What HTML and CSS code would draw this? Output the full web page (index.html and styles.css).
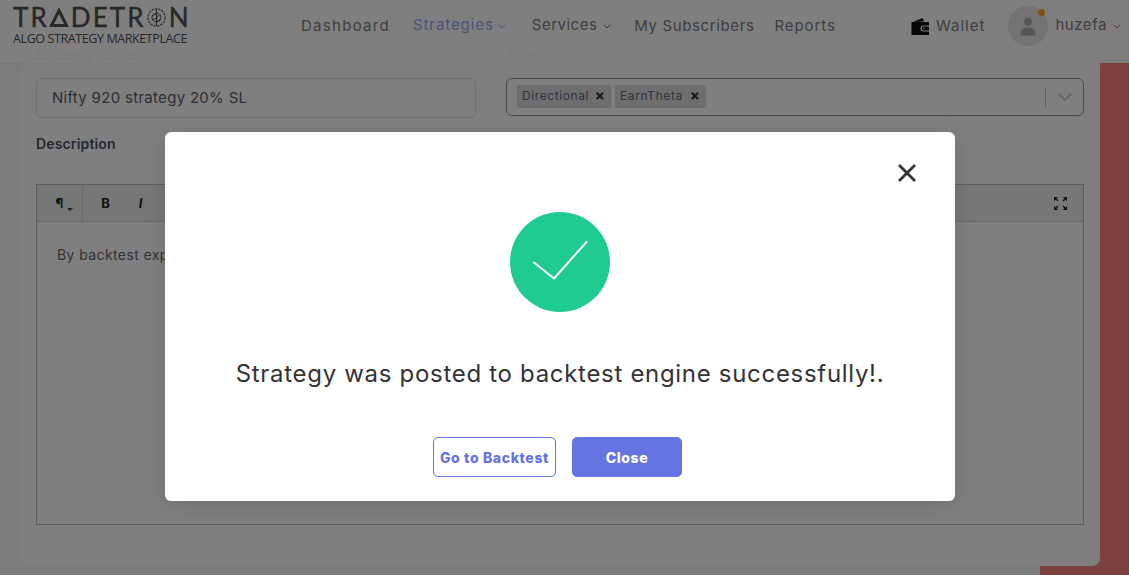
FILE: index.html
```html
<!DOCTYPE html>
<html lang="en">
<head>
<meta charset="utf-8">
<title>Tradetron</title>
<link rel="stylesheet" href="styles.css">
</head>
<body>
<div class="decor decor-right"></div>
<div class="decor decor-bottom"></div>
<main class="card">
  <div class="card-spacer"></div>
  <div class="form-row">
    <div class="field field-name">
      <label class="label label-ghost">Strategy name</label>
      <div class="input">Nifty 920 strategy 20% SL</div>
    </div>
    <div class="field field-tags">
      <label class="label label-ghost">Tags</label>
      <div class="select">
        <span class="chip">Directional<b class="chip-x">×</b></span>
        <span class="chip">EarnTheta<b class="chip-x">×</b></span>
        <span class="select-end">
          <svg width="14" height="8" viewBox="0 0 14 8"><path d="M1 1l6 6 6-6" fill="none" stroke="#cfcfcf" stroke-width="2"/></svg>
        </span>
      </div>
    </div>
  </div>
  <div class="label label-desc">Description</div>
  <div class="editor">
    <div class="toolbar">
      <span class="tool tool-para">¶<i class="mini-caret"></i></span>
      <span class="tool tool-b">B</span>
      <span class="tool tool-i">I</span>
      <svg class="tool-full" width="15" height="15" viewBox="0 0 15 15"><path d="M1 1h4L1 5zM14 1h-4l4 4zM1 14h4l-4-4zM14 14h-4l4-4z" fill="#222"/><path d="M2 2l3 3M13 2l-3 3M2 13l3-3M13 13l-3-3" stroke="#222" stroke-width="1.300"/></svg>
    </div>
    <div class="editor-body">By backtest expiry</div>
  </div>
</main>

<header class="topbar">
  <div class="logo">
    <div class="logo-main">TR<svg class="logo-tri" width="20" height="19" viewBox="0 0 20 19"><path d="M10 2.500L17.500 17.500H2.500z" fill="none" stroke="#505050" stroke-width="3"/></svg>DETR<svg class="logo-gear" width="21" height="21" viewBox="0 0 21 21"><g fill="none" stroke="#505050"><circle cx="10.500" cy="10.500" r="8.600" stroke-width="1.200" stroke-dasharray="2.400 1.100"/><circle cx="10.500" cy="10.500" r="4.500" stroke-width="1"/><path d="M10.500 2v17M10.500 6.500l-3 2M10.500 10l3-2M10.500 11l-3.500 2M10.500 14.500l3.500-2" stroke-width="1"/></g></svg>N</div>
    <div class="logo-sub">ALGO STRATEGY MARKETPLACE</div>
  </div>
  <nav class="nav">
    <a class="nav-item nav-dashboard">Dashboard</a>
    <a class="nav-item nav-active">Strategies<svg class="caret" width="8" height="5" viewBox="0 0 8 5"><path d="M.7.7L4 4l3.300-3.300" fill="none" stroke="currentColor"/></svg></a>
    <a class="nav-item nav-services">Services<svg class="caret" width="8" height="5" viewBox="0 0 8 5"><path d="M.7.7L4 4l3.300-3.300" fill="none" stroke="currentColor"/></svg></a>
    <a class="nav-item nav-subs">My Subscribers</a>
    <a class="nav-item nav-reports">Reports</a>
  </nav>
  <div class="account">
    <a class="wallet">
      <svg width="19" height="19" viewBox="0 0 19 19"><path d="M2 5L11.500 1l1.500 3.500z" fill="#111"/><path d="M.5 5h17.500v3.500h-5.500a3 3 0 000 6h5.500V18H.5z" fill="#111"/><rect x="11" y="9.500" width="7" height="4" rx="1" fill="#111"/><circle cx="13" cy="11.500" r=".9" fill="#999"/></svg>
      Wallet
    </a>
    <span class="avatar">
      <svg width="16" height="19" viewBox="0 0 16 19"><circle cx="8" cy="4.600" r="3.900" fill="#aaa"/><path d="M.5 18.500c0-5 2.500-8 7.500-8s7.500 3 7.500 8z" fill="#aaa"/></svg>
      <i class="dot"></i>
    </span>
    <a class="user">huzefa<svg class="caret" width="8" height="5" viewBox="0 0 8 5"><path d="M.7.7L4 4l3.300-3.300" fill="none" stroke="currentColor"/></svg></a>
  </div>
</header>

<div class="backdrop">
  <section class="dialog" role="dialog">
    <button class="dialog-close" aria-label="Close">
      <svg width="20" height="20" viewBox="0 0 20 20"><path d="M2 2l16 16M18 2L2 18" stroke="#333" stroke-width="2.800" fill="none"/></svg>
    </button>
    <div class="success">
      <svg width="100" height="100" viewBox="0 0 100 100"><circle cx="50" cy="50" r="50" fill="#20cb91"/><path d="M24 50.500L44 66.500 76.500 30" fill="none" stroke="#fff" stroke-width="2" stroke-linecap="round" stroke-linejoin="round"/></svg>
    </div>
    <p class="message">Strategy was posted to backtest engine successfully!.</p>
    <div class="actions">
      <button class="btn btn-outline">Go to Backtest</button>
      <button class="btn btn-solid">Close</button>
    </div>
  </section>
</div>
</body>
</html>
```
FILE: styles.css
```css
* { box-sizing: border-box; }
html, body { margin: 0; height: 100%; }
body {
  position: relative;
  height: 575px;
  overflow: hidden;
  background: #f9f9f9;
  font-family: "Inter", "Open Sans", sans-serif;
  color: #555;
  padding-left: 20px;
}
.decor { position: absolute; background: #fb847e; }
.decor-right { left: 1100px; right: 0; top: 0; bottom: 0; }
.decor-bottom { left: 1039px; right: 0; top: 500px; bottom: 0; clip-path: polygon(0 0, 100% 0, 100% 100%, 1px 100%); }

.card {
  position: relative;
  width: 1080px;
  height: 566px;
  background: #fff;
  border-radius: 0 0 8px 8px;
  padding: 0 16px;
  display: flex;
  flex-direction: column;
}
.card-spacer { height: 46px; }
.form-row { display: flex; gap: 30px; }
.field-name { width: 440px; }
.field-tags { flex: 1; }
.label { font-size: 14px; font-weight: 600; color: #4a5060; }
.label-ghost { display: block; height: 32px; line-height: 18px; color: #4a5060; }
.input {
  height: 40px;
  border: 1px solid #ddd;
  border-radius: 6px;
  padding: 0 15px;
  line-height: 38px;
  font-size: 15px;
  letter-spacing: .3px;
  color: #5b5b6e;
}
.select {
  height: 38px;
  border: 1px solid #999;
  border-radius: 6px;
  padding: 6px 10px;
  display: flex;
  gap: 4px;
  align-items: flex-start;
}
.chip {
  display: flex;
  align-items: center;
  justify-content: space-between;
  height: 23px;
  padding: 0 6px 2px 5px;
  background: #ddd;
  border-radius: 2px;
  font-size: 12px;
  letter-spacing: .6px;
  color: #5e6880;
}
.chip:nth-child(1) { width: 94px; }
.chip:nth-child(2) { width: 91px; }
.chip-x { font-size: 15px; color: #333; font-weight: 700; line-height: 1; letter-spacing: 0; }
.select-end {
  margin-left: auto;
  width: 38px;
  height: 20px;
  margin-top: 2px;
  margin-right: -10px;
  border-left: 1px solid #bbb;
  display: flex;
  align-items: center;
  justify-content: center;
}
.label-desc { margin-top: 16px; height: 50px; line-height: 20px; letter-spacing: .15px; }
.editor { height: 341px; border: 1px solid #bbb; display: flex; flex-direction: column; }
.toolbar {
  height: 37px;
  background: #eaeef2;
  border-bottom: 1px solid #d5d5d5;
  display: flex;
  align-items: center;
  position: relative;
  font-size: 13px;
  color: #222;
  font-weight: 700;
}
.tool { display: flex; align-items: center; justify-content: center; }
.tool-para { width: 46px; height: 100%; border-right: 1px solid #d5d5d5; position: relative; }
.mini-caret { position: absolute; left: 30px; bottom: 10px; border: 3px solid transparent; border-top-color: #444; border-bottom: 0; }
.tool-b { width: 45px; }
.tool-i { width: 25px; font-style: italic; }
.tool-full { margin-left: auto; margin-right: 15px; }
.editor-body { padding: 24px 20px; font-size: 14px; line-height: 18px; letter-spacing: .4px; color: #666; }

.topbar {
  position: absolute;
  left: 0; top: 0; right: 0;
  height: 63px;
  background: rgba(255, 255, 255, .96);
  box-shadow: 0 1px 4px rgba(0, 0, 0, .06);
  display: flex;
  align-items: flex-start;
  padding: 0 0 0 13px;
}
.logo { width: 288px; padding-top: 5px; color: #505050; }
.logo-main { display: flex; align-items: center; height: 24px; font-size: 26px; font-family: "Lato", sans-serif; letter-spacing: 2.100px; line-height: 24px; -webkit-text-stroke: .4px #505050; }
.logo-tri { margin: 0 2px 0 0; }
.logo-gear { margin: 0 2px 0 0; }
.logo-sub { margin-top: 3px; font-family: "Open Sans", sans-serif; font-size: 12.500px; font-weight: 500; letter-spacing: -.4px; line-height: 14px; white-space: nowrap; }
.nav { display: flex; gap: 20px; padding-top: 16px; font-size: 15px; letter-spacing: .62px; line-height: 20px; color: #7d7d7d; }
.nav-item { display: flex; align-items: center; white-space: nowrap; }
.nav-dashboard { letter-spacing: 1.290px; }
.nav-active { color: #98a4f8; letter-spacing: .92px; margin-left: 3px; position: relative; top: -1px; }
.nav-active .caret { margin-left: 4px; }
.nav-services { letter-spacing: .5px; margin-left: 6px; position: relative; top: -1px; }
.nav-subs { margin-left: 3px; }
.nav-reports { letter-spacing: .9px; }
.caret { margin-left: 6px; margin-top: 3px; }
.account { display: flex; align-items: flex-start; margin-left: auto; padding-right: 8px; font-size: 15px; letter-spacing: .55px; color: #7d7d7d; }
.wallet { display: flex; align-items: center; gap: 6px; margin-top: 16px; line-height: 20px; letter-spacing: 1px; }
.avatar {
  position: relative;
  display: flex;
  align-items: center;
  justify-content: center;
  width: 40px;
  height: 40px;
  margin: 6px 7px 0 23px;
  border-radius: 50%;
  background: #e6e6e6;
}
.dot { position: absolute; left: 30px; top: 3px; width: 7px; height: 7px; border-radius: 50%; background: #f9a825; }
.user { display: flex; align-items: center; margin-top: 15px; line-height: 20px; }

.backdrop {
  position: absolute;
  inset: 0;
  background: rgba(0, 0, 0, .5);
  padding: 132px 174px 0 165px;
}
.dialog {
  position: relative;
  height: 369px;
  background: #fff;
  border-radius: 6px;
  display: flex;
  flex-direction: column;
  align-items: center;
  padding-top: 80px;
  box-shadow: 0 4px 20px rgba(0, 0, 0, .12);
}
.dialog-close { position: absolute; right: 38px; top: 31px; width: 20px; height: 20px; padding: 0; border: 0; background: none; }
.dialog-close svg { display: block; }
.success { height: 100px; }
.success svg { display: block; }
.message { margin: 46px 0 0; font-size: 24px; line-height: 32px; color: #333; letter-spacing: .69px; }
.actions { display: flex; gap: 16px; margin: 47px 5px 0 0; }
.btn { height: 40px; border-radius: 5px; font-family: "Inter", sans-serif; font-weight: 800; font-size: 14px; letter-spacing: .62px; padding: 0; }
.btn-outline { width: 123px; background: #fff; border: 1px solid #6673e3; color: #6673e3; }
.btn-solid { width: 110px; background: #6673e3; border: 1px solid #6673e3; color: #fff; }
```
